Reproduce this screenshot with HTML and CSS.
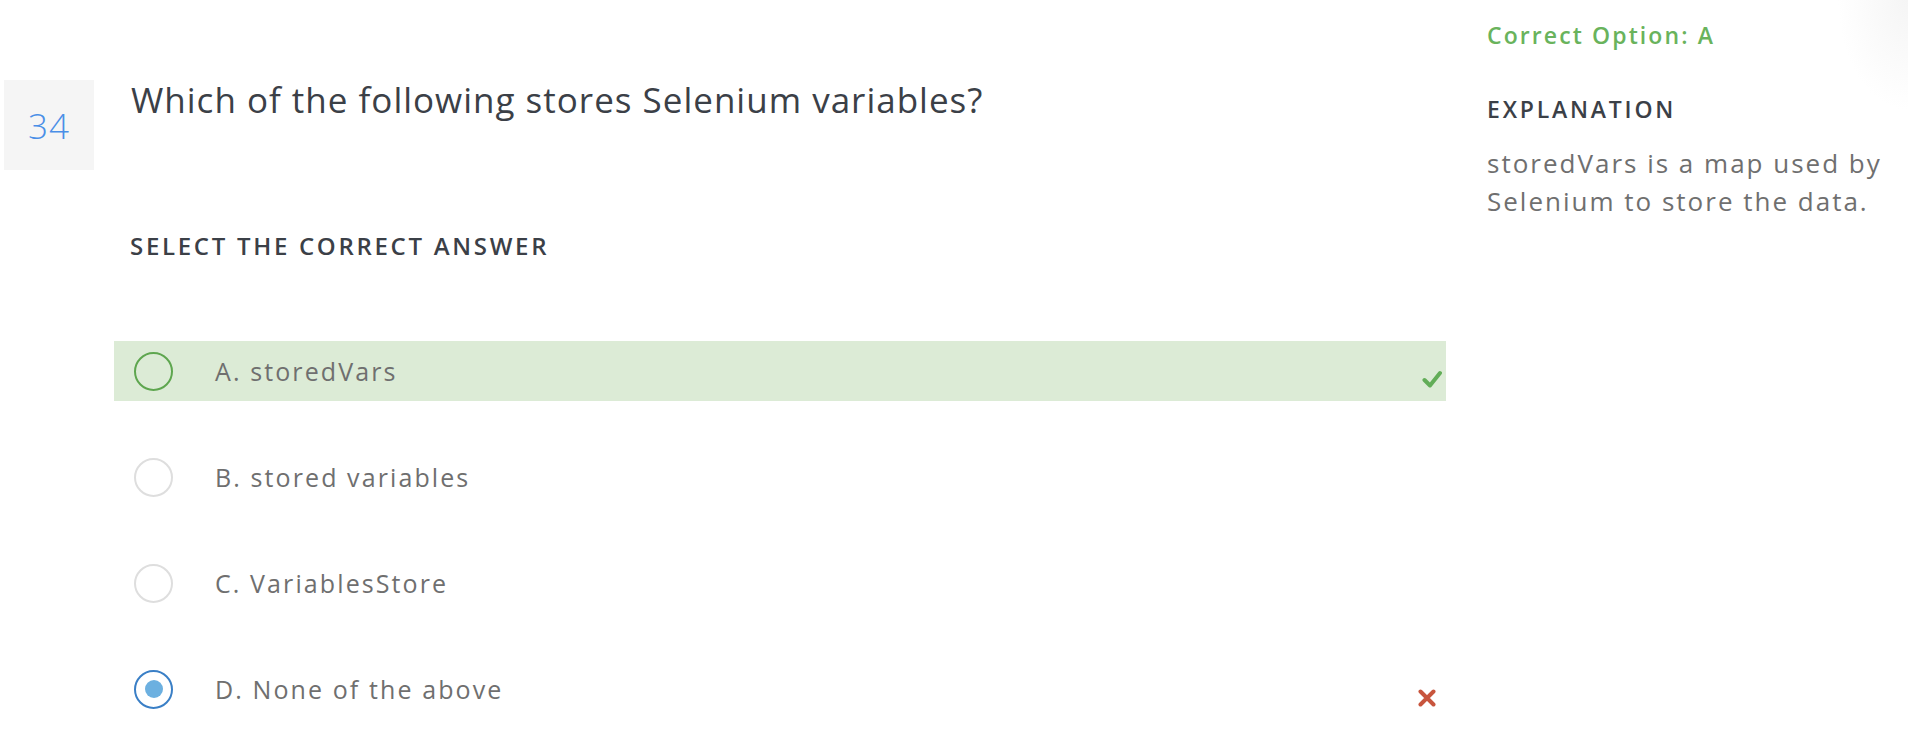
FILE: index.html
```html
<!DOCTYPE html>
<html lang="en">
<head>
<meta charset="utf-8">
<title>Question 34</title>
<link rel="stylesheet" href="styles.css">
</head>
<body>
<div class="page">
  <main class="quiz">
    <div class="qnum">34</div>
    <div class="qbody">
      <h2 class="qtext">Which of the following stores Selenium variables?</h2>
      <h3 class="qlabel">SELECT THE CORRECT ANSWER</h3>
      <ul class="options">
        <li class="option correct">
          <span class="radio radio-correct"></span>
          <span class="otext">A. storedVars</span>
          <svg class="mark" width="20" height="18" viewBox="0 0 20 18"><path d="M2.5 10 L8 15.5 L18 3" fill="none" stroke="#62ad58" stroke-width="4" stroke-linecap="round" stroke-linejoin="round"/></svg>
        </li>
        <li class="option">
          <span class="radio"></span>
          <span class="otext">B. stored variables</span>
        </li>
        <li class="option">
          <span class="radio"></span>
          <span class="otext">C. VariablesStore</span>
        </li>
        <li class="option">
          <span class="radio radio-selected"></span>
          <span class="otext">D. None of the above</span>
          <svg class="mark mark-x" width="20" height="18" viewBox="0 0 20 18"><path d="M3.5 2.5 L16.5 15.5 M16.5 2.5 L3.5 15.5" fill="none" stroke="#c8553d" stroke-width="4" stroke-linecap="round"/></svg>
        </li>
      </ul>
    </div>
  </main>
  <aside class="explain">
    <p class="answer">Correct Option: A</p>
    <h4 class="exp-title">EXPLANATION</h4>
    <p class="exp-text">storedVars is a map used by Selenium to store the data.</p>
  </aside>
</div>
</body>
</html>
```
FILE: styles.css
```css
html, body {
  margin: 0;
  padding: 0;
  background: #ffffff;
}
body {
  font-family: "Open Sans", "Liberation Sans", sans-serif;
  width: 1908px;
  height: 740px;
  overflow: hidden;
}
.page {
  display: flex;
  align-items: flex-start;
  height: 740px;
  background: radial-gradient(ellipse 70px 110px at 1908px 0px, #f5f5f5, rgba(255,255,255,0));
}
.quiz {
  display: flex;
  align-items: flex-start;
  width: 1446px;
  flex: none;
}
.qnum {
  flex: none;
  width: 90px;
  height: 90px;
  margin: 80px 0 0 4px;
  background: #f5f5f5;
  color: #4a8fe7;
  font-size: 35px;
  font-weight: 300;
  letter-spacing: 1px;
  display: flex;
  align-items: center;
  justify-content: center;
}
.qbody {
  flex: 1;
  margin-left: 20px;
  padding-top: 78px;
}
.qtext {
  margin: 0;
  padding-left: 17px;
  font-size: 35px;
  line-height: 44px;
  font-weight: 400;
  letter-spacing: 1px;
  color: #3b4047;
}
.qlabel {
  margin: 109px 0 0;
  padding-left: 16px;
  font-size: 24px;
  line-height: 30px;
  font-weight: 600;
  color: #3b4047;
  letter-spacing: 2.7px;
}
.options {
  list-style: none;
  margin: 80px 0 0;
  padding: 0;
  display: flex;
  flex-direction: column;
  gap: 46px;
}
.option {
  display: flex;
  align-items: center;
  height: 60px;
  padding-left: 20px;
  padding-right: 4px;
}
.option.correct {
  background: #dcebd6;
}
.radio {
  flex: none;
  box-sizing: border-box;
  width: 39px;
  height: 39px;
  border-radius: 50%;
  border: 2px solid #dedede;
  display: flex;
  align-items: center;
  justify-content: center;
}
.radio-correct {
  border-color: #5ea64f;
}
.radio-selected {
  border-color: #3a7fc6;
}
.radio-selected::after {
  content: "";
  width: 18px;
  height: 18px;
  border-radius: 50%;
  background: #6cb0e0;
}
.otext {
  margin-left: 42px;
  font-size: 25px;
  letter-spacing: 2.1px;
  color: #6f6f6f;
  flex: 1;
}
.mark {
  flex: none;
  margin-top: 16px;
}
.mark-x {
  margin-right: 5px;
  margin-top: 18px;
}
.explain {
  margin-left: 41px;
  width: 421px;
  flex: none;
}
.answer {
  margin: 20px 0 0;
  font-size: 23px;
  line-height: 30px;
  font-weight: 600;
  color: #69b35c;
  letter-spacing: 2.1px;
}
.exp-title {
  margin: 44px 0 0;
  font-size: 23px;
  line-height: 30px;
  font-weight: 600;
  color: #3b4047;
  letter-spacing: 2.8px;
}
.exp-text {
  margin: 20px 0 0;
  width: 421px;
  font-size: 26px;
  line-height: 38px;
  letter-spacing: 2px;
  color: #6f6f6f;
}
```
